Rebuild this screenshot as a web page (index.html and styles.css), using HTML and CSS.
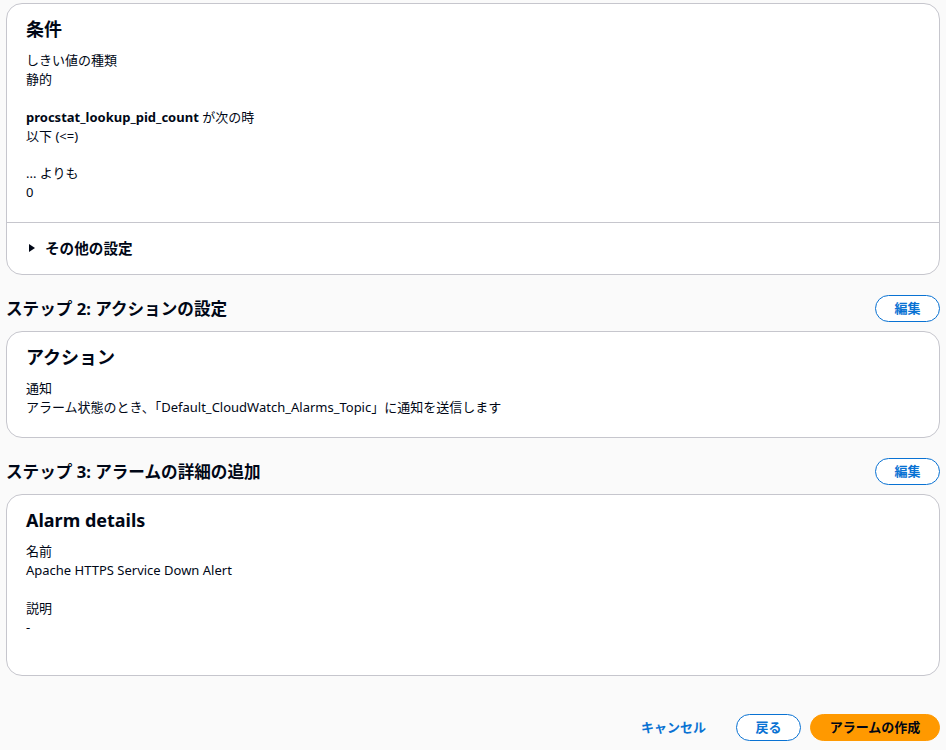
FILE: index.html
```html
<!DOCTYPE html>
<html lang="ja">
<head>
<meta charset="utf-8">
<title>アラームの作成</title>
<link rel="stylesheet" href="styles.css">
</head>
<body>
<div class="page">
  <section class="card">
    <div class="card-body">
      <h2 class="card-title">条件</h2>
      <div class="kv">
        <div>しきい値の種類</div>
        <div>静的</div>
      </div>
      <div class="kv">
        <div><b>procstat_lookup_pid_count</b> が次の時</div>
        <div>以下 (&lt;=)</div>
      </div>
      <div class="kv">
        <div>... よりも</div>
        <div>0</div>
      </div>
    </div>
    <div class="card-footer">
      <span class="caret"></span>
      <span class="expand-label">その他の設定</span>
    </div>
  </section>

  <div class="step-header">
    <h3 class="step-title">ステップ 2: アクションの設定</h3>
    <button class="btn btn-normal">編集</button>
  </div>
  <section class="card">
    <div class="card-body">
      <h2 class="card-title">アクション</h2>
      <div class="kv">
        <div>通知</div>
        <div>アラーム状態のとき、「Default_CloudWatch_Alarms_Topic」に通知を送信します</div>
      </div>
    </div>
  </section>

  <div class="step-header">
    <h3 class="step-title">ステップ 3: アラームの詳細の追加</h3>
    <button class="btn btn-normal">編集</button>
  </div>
  <section class="card">
    <div class="card-body card-body--tall">
      <h2 class="card-title">Alarm details</h2>
      <div class="kv">
        <div>名前</div>
        <div>Apache HTTPS Service Down Alert</div>
      </div>
      <div class="kv">
        <div>説明</div>
        <div>-</div>
      </div>
    </div>
  </section>

  <div class="actions">
    <button class="btn btn-link">キャンセル</button>
    <button class="btn btn-normal">戻る</button>
    <button class="btn btn-primary">アラームの作成</button>
  </div>
</div>
</body>
</html>
```

FILE: styles.css
```css
* { box-sizing: border-box; }
html, body {
  margin: 0;
  padding: 0;
  background: #fafafa;
}
body {
  font-family: "Noto Sans", "Noto Sans CJK JP", sans-serif;
  font-size: 13px;
  line-height: 19px;
  color: #000716;
}
.page {
  padding: 3px 6px 0 6px;
}
.card {
  background: #ffffff;
  border: 1px solid #c6c6cd;
  border-radius: 16px;
  overflow: hidden;
}
.card-body {
  padding: 13px 19px 20px 19px;
}
.card-body--tall {
  padding-bottom: 38px;
}
.card-title {
  margin: 0 0 10px 0;
  font-size: 18px;
  line-height: 24px;
  font-weight: 700;
}
.kv {
  margin-bottom: 18.5px;
}
.kv:last-child {
  margin-bottom: 0;
}
.kv b {
  font-weight: 700;
}
.card-footer {
  border-top: 1px solid #c6c6cd;
  padding: 14px 20px 15px 22px;
  display: flex;
  align-items: center;
  gap: 10px;
  font-size: 14.6px;
  line-height: 22px;
  font-weight: 700;
}
.caret {
  width: 0;
  height: 0;
  border-top: 4px solid transparent;
  border-bottom: 4px solid transparent;
  border-left: 6.5px solid #000716;
}
.step-header {
  display: flex;
  justify-content: space-between;
  align-items: center;
  padding: 20px 0 9px 0;
}
.step-title {
  margin: 0;
  font-size: 16.6px;
  line-height: 24px;
  font-weight: 700;
}
.btn {
  font-family: inherit;
  font-size: 13px;
  line-height: 19px;
  font-weight: 700;
  height: 27px;
  border-radius: 20px;
  padding: 0 18px;
  cursor: pointer;
  background: transparent;
  border: 1.5px solid transparent;
}
.btn-normal {
  border-color: #0972d3;
  color: #0972d3;
  background: #ffffff;
  min-width: 65px;
}
.btn-link {
  color: #0972d3;
  padding: 0 20px;
}
.btn-primary {
  background: #ff9900;
  border-color: #ff9900;
  color: #000716;
  padding: 0 18px;
  min-width: 130px;
}
.actions {
  display: flex;
  justify-content: flex-end;
  align-items: center;
  gap: 9px;
  margin-top: 38px;
}
```
